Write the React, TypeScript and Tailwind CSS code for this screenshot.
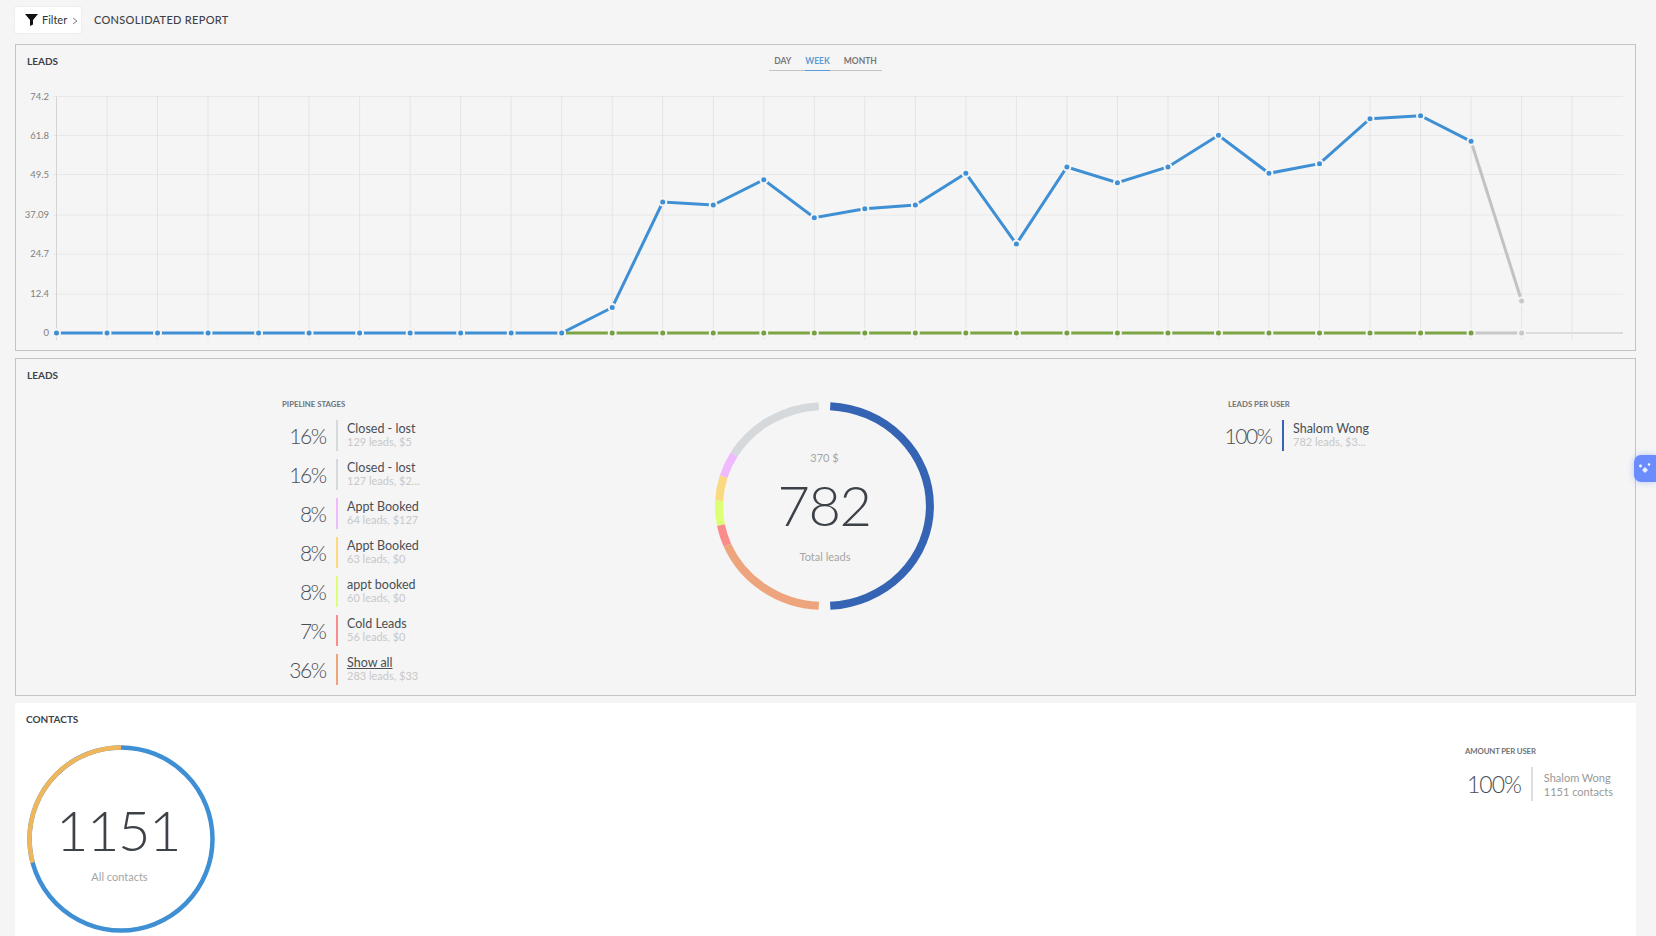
const ink = "#3d4249";

// ellipse arc, angles in degrees measured from 12 o'clock going counter-clockwise
function arc(cx: number, cy: number, rx: number, ry: number, from: number, to: number) {
  const pt = (a: number) => {
    const r = (a * Math.PI) / 180;
    return `${(cx - rx * Math.sin(r)).toFixed(2)} ${(cy - ry * Math.cos(r)).toFixed(2)}`;
  };
  const large = Math.abs(to - from) > 180 ? 1 : 0;
  const sweep = to < from ? 1 : 0;
  return `M${pt(from)} A${rx} ${ry} 0 ${large} ${sweep} ${pt(to)}`;
}

const blue = [
  333, 333, 333, 333, 333, 333, 333, 333, 333, 333, 333, 307.5, 202, 205, 179.7, 217.7, 208.7, 205, 173.3, 244, 167,
  182.8, 167, 135.3, 173.3, 163.7, 118.7, 115.7, 141.3,
];
const gridY = [96.5, 135.5, 174.5, 215, 254, 294, 333];
const yLabels = ["74.2", "61.8", "49.5", "37.09", "24.7", "12.4", "0"];
const xAt = (i: number) => 40.5 + 50.52 * i;

function Dot({ x, y, color }: { x: number; y: number; color: string }) {
  return <circle cx={x} cy={y} r={3.5} fill={color} stroke="#f5f5f5" strokeWidth={2} />;
}

function LeadsChart() {
  const top = 45;
  const pts = (idx: number[], ys: (i: number) => number) => idx.map((i) => `${xAt(i)},${ys(i) - top}`).join(" ");
  const range = (a: number, b: number) => Array.from({ length: b - a + 1 }, (_, k) => a + k);
  return (
    <svg width={1619} height={304} className="absolute left-0 top-0" style={{ fontFamily: "Lato, sans-serif" }}>
      {gridY.map((y, i) => (
        <g key={y}>
          <line x1={37} x2={1607} y1={y - top} y2={y - top} stroke={i === 6 ? "#c4c4c4" : "#e8e8e8"} strokeWidth={1} />
          <text x={33} y={y - top + 3} textAnchor="end" fontSize={9.5} fill="#808080">
            {yLabels[i]}
          </text>
        </g>
      ))}
      {range(0, 30).map((i) => (
        <line key={i} x1={xAt(i)} x2={xAt(i)} y1={51.5} y2={295} stroke={i === 0 ? "#d4d4d4" : "#e4e4e4"} strokeWidth={1} />
      ))}
      <polyline points={pts(range(28, 29), (i) => (i === 28 ? blue[28] : 301))} fill="none" stroke="#c2c2c2" strokeWidth={3} />
      <polyline points={pts(range(28, 29), () => 333)} fill="none" stroke="#c8c8c8" strokeWidth={3} />
      <polyline points={pts(range(10, 28), () => 333)} fill="none" stroke="#7ba545" strokeWidth={3} />
      <polyline points={pts(range(0, 28), (i) => blue[i])} fill="none" stroke="#3f8fd4" strokeWidth={3} />
      {range(11, 28).map((i) => (
        <Dot key={i} x={xAt(i)} y={333 - top} color="#74a13e" />
      ))}
      {range(0, 28).map((i) => (
        <Dot key={i} x={xAt(i)} y={blue[i] - top} color="#3f8fd4" />
      ))}
      <Dot x={xAt(29)} y={301 - top} color="#c8c8c8" />
      <Dot x={xAt(29)} y={333 - top} color="#c8c8c8" />
    </svg>
  );
}

const stages = [
  { pct: "16%", name: "Closed - lost", sub: "129 leads, $5", bar: "bg-[#d5d9dc]" },
  { pct: "16%", name: "Closed - lost", sub: "127 leads, $2...", bar: "bg-[#d5d9dc]" },
  { pct: "8%", name: "Appt Booked", sub: "64 leads, $127", bar: "bg-[#f0baff]" },
  { pct: "8%", name: "Appt Booked", sub: "63 leads, $0", bar: "bg-[#fbd97e]" },
  { pct: "8%", name: "appt booked", sub: "60 leads, $0", bar: "bg-[#ddff75]" },
  { pct: "7%", name: "Cold Leads", sub: "56 leads, $0", bar: "bg-[#fb8c8c]" },
  { pct: "36%", name: "Show all", sub: "283 leads, $33", bar: "bg-[#eea57e]", link: true },
];

function StatRow({ pct, name, sub, bar, link }: { pct: string; name: string; sub: string; bar: string; link?: boolean }) {
  return (
    <div className="flex h-[31px] items-stretch">
      <div className="w-[60px] pr-[1.5px] text-right text-[21px] leading-[31px] font-light tracking-[-1.5px] text-[#4a4e54]">{pct}</div>
      <div className={`ml-[9px] w-[2px] ${bar}`} />
      <div className="ml-[9px] w-[100px] pt-[1px]">
        <div className={`text-[12.5px] leading-[16px] text-[#4a4e54] ${link ? "underline" : ""}`}>{name}</div>
        <div className="-mt-[1px] text-[11px] leading-[12px] whitespace-nowrap text-[#c8c8c8]">{sub}</div>
      </div>
    </div>
  );
}

function LeadsDonut() {
  const cx = 110.5;
  const cy = 105;
  const segs: [number, number, string][] = [
    [3.1, 59, "#d5d9dc"],
    [59, 73, "#f0baff"],
    [73, 87, "#fbd97e"],
    [87, 101, "#ddff75"],
    [101, 113, "#fb8c8c"],
    [113, 176.9, "#eea57e"],
  ];
  return (
    <svg width={222} height={210} className="block">
      <path d={arc(cx, cy, 105.5, 100, -3.1, -176.9)} fill="none" stroke="#3564b4" strokeWidth={8} />
      {segs.map(([a, b, c]) => (
        <path key={c + a} d={arc(cx, cy, 105.5, 100, a, b)} fill="none" stroke={c} strokeWidth={8} />
      ))}
    </svg>
  );
}

function ContactsRing() {
  return (
    <svg width={190} height={190} className="block">
      <circle cx={94} cy={94} r={91.5} fill="none" stroke="#3f8fd4" strokeWidth={4.5} />
      <path d={arc(94, 94, 91.5, 91.5, 0, 105)} fill="none" stroke="#efb65c" strokeWidth={4.5} />
    </svg>
  );
}

export default function App() {
  return (
    <div className="relative h-[936px] w-full overflow-hidden bg-[#f5f5f5] pr-[20px] pl-[15px] font-['Lato',sans-serif]" style={{ color: ink }}>
      {/* top bar */}
      <div className="flex h-[44px] items-start">
        <button className="mt-[7px] flex h-[26px] w-[66px] items-center rounded-[2px] bg-white pl-[10px] text-[11px] text-[#333] shadow-[0_0_1px_rgba(0,0,0,0.25)]">
          <svg width={13} height={12} viewBox="0 0 13 12" className="mr-[4px] -mt-[1px]">
            <path d="M0 0H13L8 6V10.5L5 12V6Z" fill="#111" />
          </svg>
          Filter
          <svg width={6} height={8} viewBox="0 0 6 8" className="ml-[5px] mt-[1px]">
            <path d="M1 1L5 4L1 7" fill="none" stroke="#666" strokeWidth={0.8} />
          </svg>
        </button>
        <div className="mt-[13px] ml-[13px] text-[11px] leading-[14px] font-medium tracking-[0.3px] text-[#3d4249]">CONSOLIDATED REPORT</div>
      </div>

      {/* line chart */}
      <section className="relative h-[307px] border border-[#c4c4c4] pt-[9px] pl-[11px]">
        <LeadsChart />
        <h2 className="relative text-[10px] leading-[14px] font-bold">LEADS</h2>
        <div className="absolute top-[9px] left-[753px] flex h-[17px] w-[113px] justify-center gap-[14px] border-b border-[#c4c4c4] text-[8.5px] leading-[14px] font-bold text-[#777]">
          <span>DAY</span>
          <span className="-mb-px border-b border-[#5b9bd5] text-[#5b9bd5]">WEEK</span>
          <span>MONTH</span>
        </div>
      </section>

      {/* pipeline */}
      <section className="relative mt-[7px] flex h-[338px] border border-[#c4c4c4] pt-[9px] pl-[11px]">
        <h2 className="w-[200px] text-[10px] leading-[14px] font-bold">LEADS</h2>
        <div className="w-[450px] pt-[29px] pl-[55px]">
          <div className="text-[7.8px] leading-[14px] font-bold text-[#6f7378]">PIPELINE STAGES</div>
          <div className="mt-[9px] ml-[-15px] flex flex-col gap-[8px]">
            {stages.map((s, i) => (
              <StatRow key={i} {...s} />
            ))}
          </div>
        </div>
        <div className="relative mt-[33px] ml-[37px] h-[210px] w-[222px]">
          <LeadsDonut />
          <div className="absolute inset-0 flex flex-col items-center text-center">
            <div className="mt-[50px] pr-[1px] text-[11px] leading-[14px] text-[#a5a5a5]">370 $</div>
            <div className="mt-[8px] pr-[2px] text-[56px] leading-[64px] font-light tracking-[-1.5px] text-[#3d4249]">782</div>
            <div className="mt-[13px] text-[11px] leading-[14px] text-[#a5a5a5]">Total leads</div>
          </div>
        </div>
        <div className="ml-[292px] pt-[29px]">
          <div className="text-[7.8px] leading-[14px] font-bold text-[#6f7378]">LEADS PER USER</div>
          <div className="mt-[9px] ml-[-15px]">
            <StatRow pct="100%" name="Shalom Wong" sub="782 leads, $3..." bar="bg-[#3564b4]" />
          </div>
        </div>
      </section>

      {/* contacts */}
      <section className="relative mt-[7px] flex h-[240px] justify-between bg-white pt-[9px] pl-[11px]">
        <div>
          <h2 className="text-[10px] leading-[14px] font-bold">CONTACTS</h2>
          <div className="relative mt-[19px] ml-[1px] h-[190px] w-[190px]">
            <ContactsRing />
            <div className="absolute inset-0 text-center">
              <div className="mt-[53px] w-[182px] text-[56px] leading-[64px] font-light tracking-[-1.5px] text-[#3d4249]">1151</div>
              <div className="mt-[8px] w-[185px] text-[11px] leading-[14px] text-[#a5a5a5]">All contacts</div>
            </div>
          </div>
        </div>
        <div className="mr-[23px] w-[148px] pt-[32px]">
          <div className="text-[7.8px] leading-[14px] font-bold tracking-[-0.15px] text-[#6f7378]">AMOUNT PER USER</div>
          <div className="mt-[9px] flex h-[34px] items-stretch">
            <div className="w-[59px] pr-[1px] text-right text-[23px] leading-[34px] font-light tracking-[-1px] text-[#4a4e54]">100%</div>
            <div className="ml-[9px] w-[2px] bg-[#ddd]" />
            <div className="ml-[11px] pt-[4px] text-[11px] leading-[14px] whitespace-nowrap text-[#999]">
              <div>Shalom Wong</div>
              <div>1151 contacts</div>
            </div>
          </div>
        </div>
      </section>

      {/* floating assistant tab */}
      <button className="absolute top-[455px] right-0 flex h-[27px] w-[22px] items-center justify-center rounded-l-[7px] bg-[#6b8cff] shadow-[0_0_6px_rgba(107,140,255,0.45)]">
        <svg width={14} height={14} viewBox="0 0 14 14" fill="#fff">
          <path d="M7 5L10 8L7 11L4 8Z" opacity={0.85} />
          <circle cx={2.5} cy={4} r={1.4} />
          <circle cx={11} cy={2.5} r={1.2} />
        </svg>
      </button>
    </div>
  );
}
